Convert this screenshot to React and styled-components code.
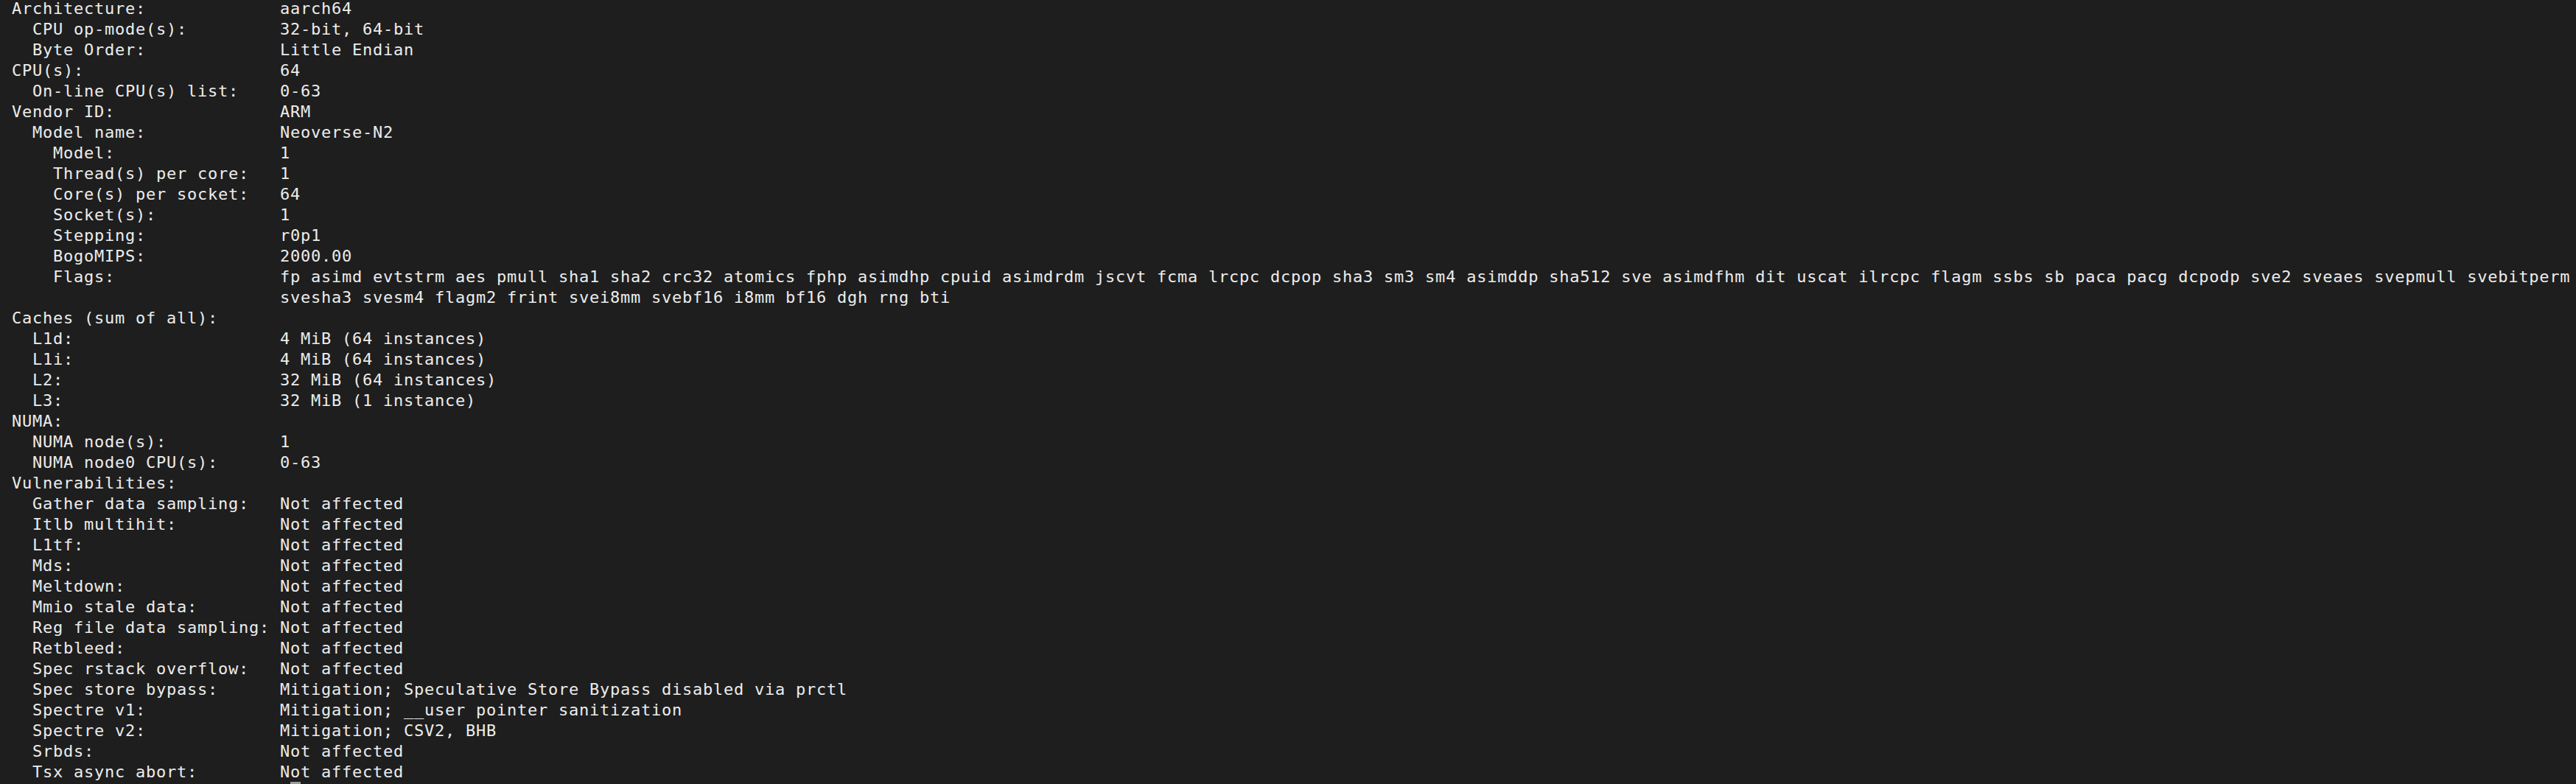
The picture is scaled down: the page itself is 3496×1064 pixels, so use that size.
import React from 'react';
import styled, { createGlobalStyle } from 'styled-components';

const GlobalStyle = createGlobalStyle`
  html, body {
    margin: 0;
    padding: 0;
    background: #1e1e1e;
    height: 1064px;
    overflow: hidden;
  }
`;

const CHAR = 14;
const VALUE_COL = 26;

const Terminal = styled.div`
  box-sizing: border-box;
  width: 3496px;
  height: 1064px;
  overflow: hidden;
  background: #1e1e1e;
  color: #ececec;
  font-family: "DejaVu Sans Mono", "Liberation Mono", monospace;
  font-size: 22px;
  letter-spacing: ${CHAR - 22 * 0.602}px;
  line-height: 28px;
  padding: 0 0 0 16px;
`;

const Output = styled.div`
  margin-top: -2px;
`;

const Line = styled.div`
  display: flex;
  height: 28px;
  white-space: pre;
`;

const Label = styled.span`
  flex: none;
  width: ${VALUE_COL * CHAR}px;
  padding-left: ${({ indent }) => indent * 2 * CHAR}px;
  box-sizing: border-box;
`;

const Value = styled.span`
  white-space: pre;
`;

const Cursor = styled.span`
  display: inline-block;
  width: ${CHAR}px;
  height: 26px;
  margin-left: ${27 * CHAR}px;
  margin-top: -1px;
  background: #9c9c9c;
`;

const rows = [
  [0, 'Architecture:', 'aarch64'],
  [1, 'CPU op-mode(s):', '32-bit, 64-bit'],
  [1, 'Byte Order:', 'Little Endian'],
  [0, 'CPU(s):', '64'],
  [1, 'On-line CPU(s) list:', '0-63'],
  [0, 'Vendor ID:', 'ARM'],
  [1, 'Model name:', 'Neoverse-N2'],
  [2, 'Model:', '1'],
  [2, 'Thread(s) per core:', '1'],
  [2, 'Core(s) per socket:', '64'],
  [2, 'Socket(s):', '1'],
  [2, 'Stepping:', 'r0p1'],
  [2, 'BogoMIPS:', '2000.00'],
  [2, 'Flags:', 'fp asimd evtstrm aes pmull sha1 sha2 crc32 atomics fphp asimdhp cpuid asimdrdm jscvt fcma lrcpc dcpop sha3 sm3 sm4 asimddp sha512 sve asimdfhm dit uscat ilrcpc flagm ssbs sb paca pacg dcpodp sve2 sveaes svepmull svebitperm'],
  [0, '', 'svesha3 svesm4 flagm2 frint svei8mm svebf16 i8mm bf16 dgh rng bti'],
  [0, 'Caches (sum of all):', ''],
  [1, 'L1d:', '4 MiB (64 instances)'],
  [1, 'L1i:', '4 MiB (64 instances)'],
  [1, 'L2:', '32 MiB (64 instances)'],
  [1, 'L3:', '32 MiB (1 instance)'],
  [0, 'NUMA:', ''],
  [1, 'NUMA node(s):', '1'],
  [1, 'NUMA node0 CPU(s):', '0-63'],
  [0, 'Vulnerabilities:', ''],
  [1, 'Gather data sampling:', 'Not affected'],
  [1, 'Itlb multihit:', 'Not affected'],
  [1, 'L1tf:', 'Not affected'],
  [1, 'Mds:', 'Not affected'],
  [1, 'Meltdown:', 'Not affected'],
  [1, 'Mmio stale data:', 'Not affected'],
  [1, 'Reg file data sampling:', 'Not affected'],
  [1, 'Retbleed:', 'Not affected'],
  [1, 'Spec rstack overflow:', 'Not affected'],
  [1, 'Spec store bypass:', 'Mitigation; Speculative Store Bypass disabled via prctl'],
  [1, 'Spectre v1:', 'Mitigation; __user pointer sanitization'],
  [1, 'Spectre v2:', 'Mitigation; CSV2, BHB'],
  [1, 'Srbds:', 'Not affected'],
  [1, 'Tsx async abort:', 'Not affected'],
];

export default function App() {
  return (
    <>
      <GlobalStyle />
      <Terminal>
        <Output>
          {rows.map(([indent, label, value], i) => (
            <Line key={i}>
              <Label indent={indent}>{label}</Label>
              <Value>{value}</Value>
            </Line>
          ))}
          <Line>
            <Cursor />
          </Line>
        </Output>
      </Terminal>
    </>
  );
}
